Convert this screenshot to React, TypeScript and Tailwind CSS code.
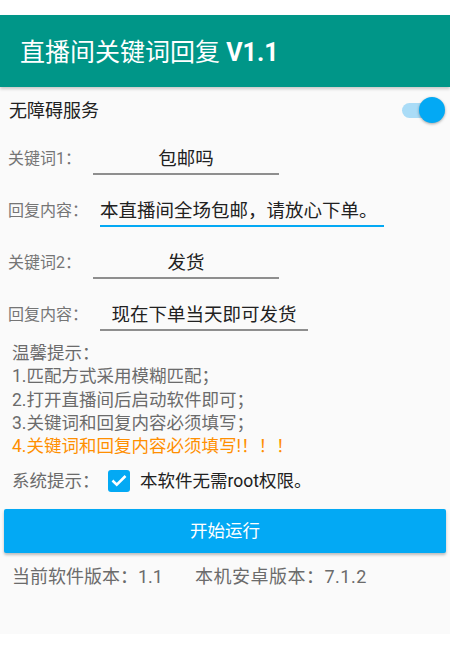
import { useState } from "react"

function App() {
  const [enabled, setEnabled] = useState(true)
  const [checked, setChecked] = useState(true)

  return (
    <div
      className="w-[450px] h-[646px] bg-white flex flex-col"
      style={{ fontFamily: 'Roboto, "Noto Sans CJK SC", sans-serif' }}
    >
      <div className="h-[15px] bg-white" />

      {/* Toolbar */}
      <div className="h-[72px] bg-[#009688] flex items-center pl-[20px] pt-[3px] shadow-[0_2px_3px_rgba(0,0,0,0.2)] z-10">
        <h1 className="text-[25px] text-white leading-none">
          直播间关键词回复 <span className="font-bold">V1.1</span>
        </h1>
      </div>

      <div className="h-[547px] bg-[#fafafa] flex flex-col">
        {/* Accessibility switch */}
        <div className="h-[46px] flex items-center justify-between pl-[9px] pr-[12px]">
          <span className="text-[18px] text-[#212121]">无障碍服务</span>
          <button
            onClick={() => setEnabled(!enabled)}
            className="relative w-[36px] h-[26px] flex items-center"
          >
            <span className={`w-[34px] h-[15px] rounded-full ${enabled ? "bg-[#aadcf7]" : "bg-[#bdbdbd]"}`} />
            <span
              className={`absolute top-0 w-[26px] h-[26px] rounded-full shadow-[0_1px_3px_rgba(0,0,0,0.35)] ${enabled ? "left-[17px] bg-[#03a9f4]" : "left-[-4px] bg-[#f1f1f1]"}`}
            />
          </button>
        </div>

        {/* Keyword 1 */}
        <div className="h-[52px] flex items-center pl-[8px]">
          <span className="w-[85px] text-[16px] text-[#757575]">关键词1：</span>
          <div className="w-[186px] h-[32px] pt-[3px] flex items-center justify-center border-b-2 border-[#8e8e8e] text-[18.5px] text-[#212121]">
            包邮吗
          </div>
        </div>

        {/* Reply 1 */}
        <div className="h-[52px] flex items-center pl-[8px]">
          <span className="w-[92px] text-[16px] text-[#757575]">回复内容：</span>
          <div className="w-[284px] h-[32px] pt-[3px] flex items-center border-b-2 border-[#03a9f4] text-[18.5px] text-[#212121] whitespace-nowrap">
            本直播间全场包邮，请放心下单。
          </div>
        </div>

        {/* Keyword 2 */}
        <div className="h-[52px] flex items-center pl-[8px]">
          <span className="w-[85px] text-[16px] text-[#757575]">关键词2：</span>
          <div className="w-[186px] h-[32px] pt-[3px] flex items-center justify-center border-b-2 border-[#8e8e8e] text-[18.5px] text-[#212121]">
            发货
          </div>
        </div>

        {/* Reply 2 */}
        <div className="h-[52px] flex items-center pl-[8px]">
          <span className="w-[92px] text-[16px] text-[#757575]">回复内容：</span>
          <div className="w-[208px] h-[32px] pt-[3px] flex items-center justify-center border-b-2 border-[#8e8e8e] text-[18.5px] text-[#212121]">
            现在下单当天即可发货
          </div>
        </div>

        {/* Tips */}
        <div className="pl-[12px] pt-[1px] text-[17.5px] leading-[23.3px] text-[#6b6b6b]">
          <p>温馨提示：</p>
          <p>1.匹配方式采用模糊匹配；</p>
          <p>2.打开直播间后启动软件即可；</p>
          <p>3.关键词和回复内容必须填写；</p>
          <p className="text-[#ff8f00]">4.关键词和回复内容必须填写!！！！</p>
        </div>

        {/* System hint */}
        <div className="h-[46px] flex items-center pl-[12px]">
          <span className="w-[96px] text-[17.5px] text-[#6b6b6b]">系统提示：</span>
          <button
            onClick={() => setChecked(!checked)}
            className={`w-[22px] h-[22px] rounded-[3px] flex items-center justify-center ${checked ? "bg-[#03a9f4]" : "border-2 border-[#757575]"}`}
          >
            {checked && (
              <svg width="18" height="18" viewBox="0 0 24 24" fill="none" stroke="white" strokeWidth="3.4" strokeLinecap="square">
                <path d="M4.5 12.5l4.5 4.5L19.5 6.5" />
              </svg>
            )}
          </button>
          <span className="ml-[10px] text-[17.5px] text-[#212121]">本软件无需root权限。</span>
        </div>

        {/* Start button */}
        <div className="px-[4px] pt-[5px]">
          <button className="w-full h-[44px] bg-[#03a9f4] rounded-[2px] text-white text-[17.5px] shadow-[0_2px_3px_rgba(0,0,0,0.25)]">
            开始运行
          </button>
        </div>

        {/* Versions */}
        <div className="flex items-center h-[46px] pl-[12px] text-[18px] text-[#6b6b6b] whitespace-nowrap">
          <span className="w-[183px]">当前软件版本：1.1</span>
          <span className="tracking-[0.5px]">本机安卓版本：7.1.2</span>
        </div>
      </div>

      <div className="flex-1 bg-white" />
    </div>
  )
}

export default App
